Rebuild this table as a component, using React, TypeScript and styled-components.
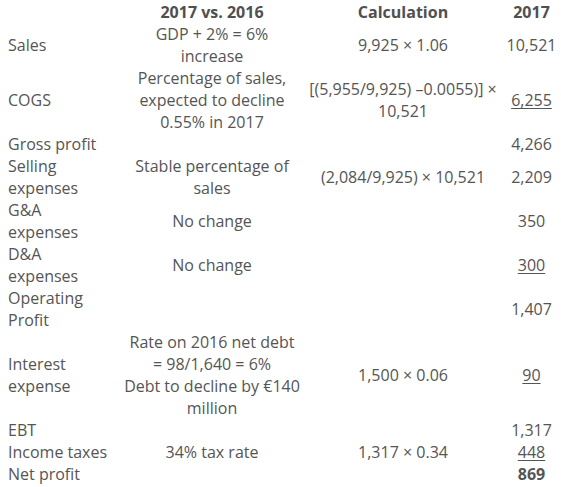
import styled, { createGlobalStyle } from 'styled-components';

const GlobalStyle = createGlobalStyle`
  body {
    margin: 0;
    background: #fff;
    font-family: 'Open Sans', 'Noto Sans', sans-serif;
  }
`;

const Table = styled.table`
  margin: 1px 0 0 8px;
  border-collapse: collapse;
  table-layout: fixed;
  width: 553px;
  font-size: 16px;
  line-height: 22px;
  color: #555;
`;

const Head = styled.th`
  padding: 0;
  font-weight: 700;
  text-align: center;
  color: #505050;
`;

const Cell = styled.td<{ $align?: 'left' | 'center'; $bold?: boolean; $underline?: boolean }>`
  padding: 0;
  vertical-align: middle;
  text-align: ${({ $align }) => $align ?? 'center'};
  font-weight: ${({ $bold }) => ($bold ? 700 : 400)};
  white-space: nowrap;
  overflow: visible;
`;

const Figure = styled.span<{ $underline?: boolean }>`
  text-decoration: ${({ $underline }) => ($underline ? 'underline' : 'none')};
  text-underline-offset: 2px;
`;

type Row = {
  label: string[];
  change?: string[];
  calc?: string[];
  value: string;
  underline?: boolean;
  bold?: boolean;
};

const rows: Row[] = [
  { label: ['Sales'], change: ['GDP + 2% = 6%', 'increase'], calc: ['9,925 × 1.06'], value: '10,521' },
  {
    label: ['COGS'],
    change: ['Percentage of sales,', 'expected to decline', '0.55% in 2017'],
    calc: ['[(5,955/9,925) –0.0055)] ×', '10,521'],
    value: '6,255',
    underline: true,
  },
  { label: ['Gross profit'], value: '4,266' },
  {
    label: ['Selling', 'expenses'],
    change: ['Stable percentage of', 'sales'],
    calc: ['(2,084/9,925) × 10,521'],
    value: '2,209',
  },
  { label: ['G&A', 'expenses'], change: ['No change'], value: '350' },
  { label: ['D&A', 'expenses'], change: ['No change'], value: '300', underline: true },
  { label: ['Operating', 'Profit'], value: '1,407' },
  {
    label: ['Interest', 'expense'],
    change: ['Rate on 2016 net debt', '= 98/1,640 = 6%', 'Debt to decline by €140', 'million'],
    calc: ['1,500 × 0.06'],
    value: '90',
    underline: true,
  },
  { label: ['EBT'], value: '1,317' },
  { label: ['Income taxes'], change: ['34% tax rate'], calc: ['1,317 × 0.34'], value: '448', underline: true },
  { label: ['Net profit'], value: '869', bold: true },
];

const lines = (parts?: string[]) =>
  parts?.map((p, i) => (
    <span key={i}>
      {i > 0 && <br />}
      {p}
    </span>
  ));

export default function App() {
  return (
    <>
      <GlobalStyle />
      <Table>
        <colgroup>
          <col style={{ width: 112 }} />
          <col style={{ width: 184 }} />
          <col style={{ width: 198 }} />
          <col style={{ width: 59 }} />
        </colgroup>
        <thead>
          <tr>
            <Head />
            <Head>2017 vs. 2016</Head>
            <Head>Calculation</Head>
            <Head>2017</Head>
          </tr>
        </thead>
        <tbody>
          {rows.map((r) => (
            <tr key={r.label.join(' ')}>
              <Cell $align="left">{lines(r.label)}</Cell>
              <Cell>{lines(r.change)}</Cell>
              <Cell>{lines(r.calc)}</Cell>
              <Cell $bold={r.bold}>
                <Figure $underline={r.underline}>{r.value}</Figure>
              </Cell>
            </tr>
          ))}
        </tbody>
      </Table>
    </>
  );
}
